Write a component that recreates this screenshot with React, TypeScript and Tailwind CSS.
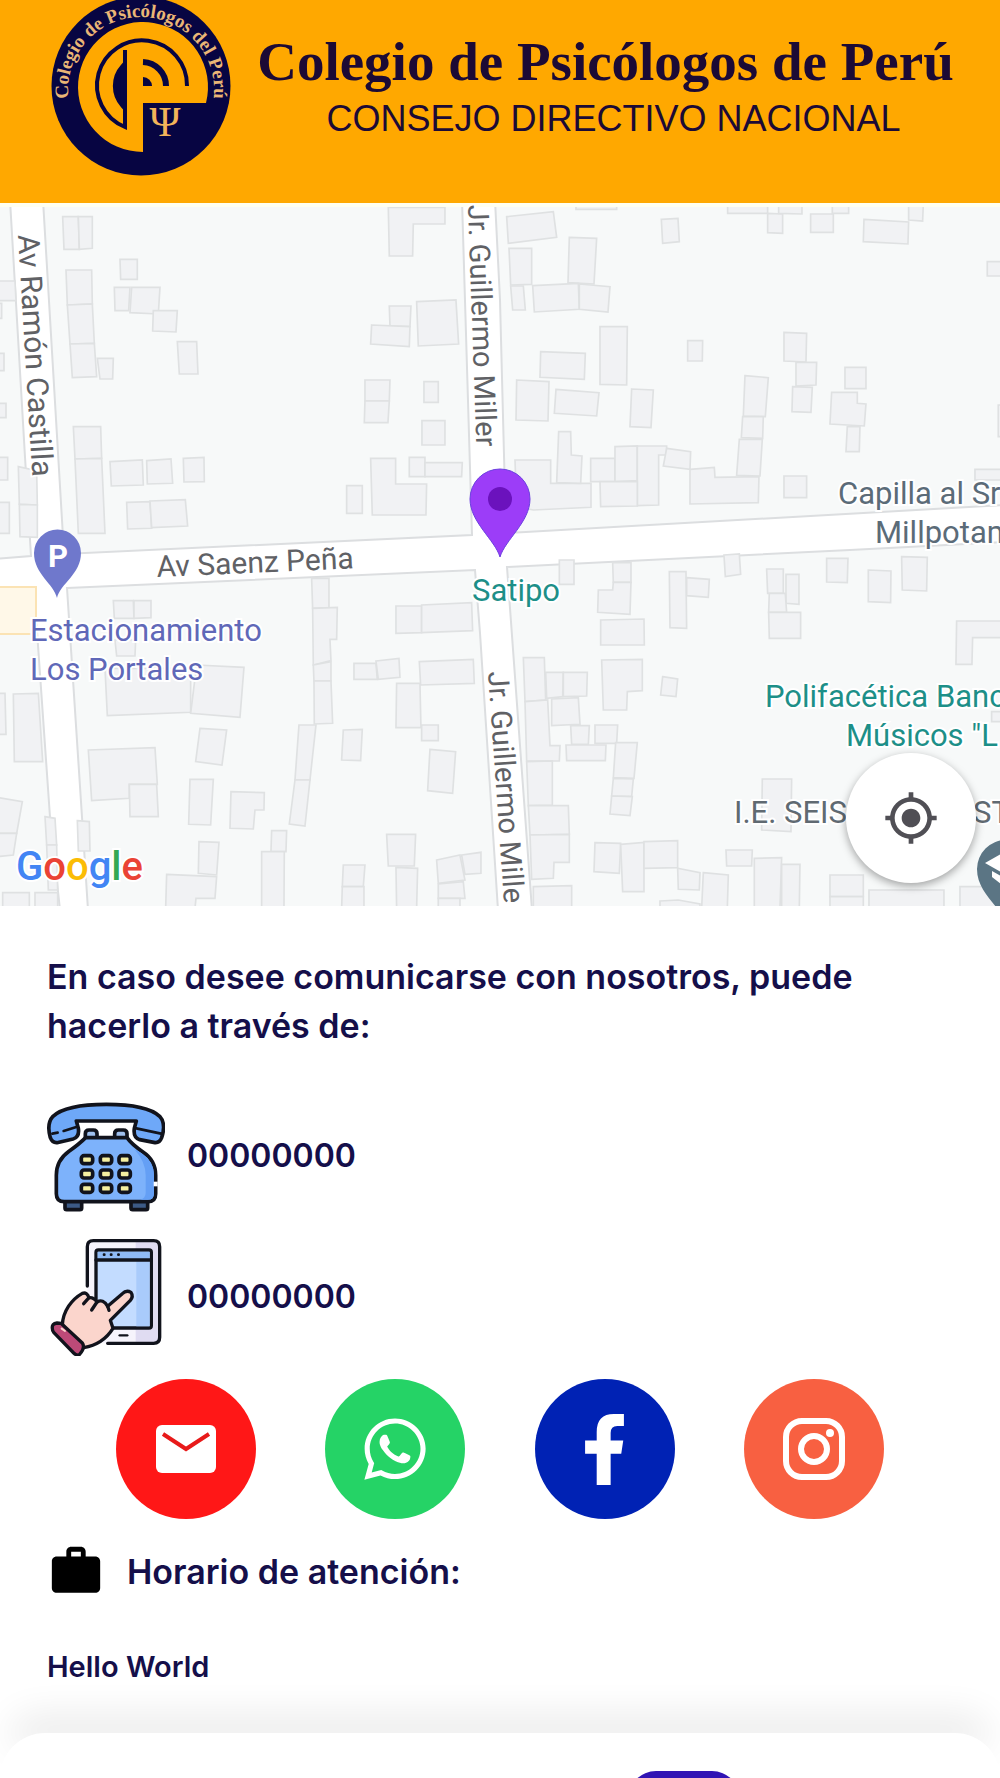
import React from "react";
import { FaWhatsapp } from "react-icons/fa";
import { MdMyLocation, MdWork } from "react-icons/md";

const NAVY = "#070542";
const ORANGE = "#ffa800";

function SealLogo() {
  return (
    <svg viewBox="51 -4 180 180" className="-mt-1 size-[180px] shrink-0" role="img" aria-label="Colegio de Psicólogos del Perú">
      <defs>
        <path id="seal-arc" d="M70 107 A73 73 0 1 1 212 107" />
      </defs>
      <circle cx="141" cy="86" r="89.5" fill={NAVY} />
      <path d="M143 103 V152 A65 65 0 1 1 206 103 Z" fill={ORANGE} />
      <path d="M187 86 A45 45 0 1 0 125 127 V50" fill="none" stroke={NAVY} strokeWidth="4" />
      <path d="M122 66 A30 30 0 0 0 122 106 Z" fill={NAVY} stroke={NAVY} strokeWidth="3" />
      <path d="M143 62 A24 24 0 0 1 166 86" fill="none" stroke={NAVY} strokeWidth="6" />
      <path d="M143 77 A9 9 0 0 1 152 86 H143 Z" fill={NAVY} />
      <text x="165" y="136" textAnchor="middle" fontFamily="Liberation Serif, serif" fontSize="42" fill="#f3b45a">Ψ</text>
      <text fontFamily="Liberation Serif, serif" fontWeight="700" fontSize="19" fill="#eab676">
        <textPath href="#seal-arc" startOffset="50%" textAnchor="middle">Colegio de Psicólogos del Perú</textPath>
      </text>
    </svg>
  );
}

const blocks = [
  "-5,200 10,200 25,457 31,556 -5,559",
  "43,200 62,520 64,554 472,535 462,200",
  "495,200 500,300 506,533 1005,505 1005,200",
  "-5,590 34,588 50,817 60,910 -5,910",
  "67,588 475,570 480,633 498,910 88,910 82,817",
  "507,567 850,550 1005,542 1005,910 532,910",
];

type Sector = { shift: string; shapes: string[] };

const sectors: Sector[] = [
  {
    shift: "translate(0 200) scale(0.3333)",
    shapes: [
      "188,50 235,50 238,148 192,148", "235,50 277,50 277,145 238,148",
      "198,210 275,210 277,312 202,315", "202,315 277,312 283,430 210,432", "210,432 283,430 290,530 217,533",
      "292,475 340,475 338,537 300,537", "360,178 412,178 412,238 362,238", "343,262 390,262 386,332 345,332",
      "395,262 480,262 475,342 390,338", "460,332 532,332 528,396 458,393", "532,425 590,425 594,522 538,522",
      "220,680 302,680 305,775 225,777", "225,777 305,775 315,1000 235,1000", "330,785 427,780 430,855 334,858",
      "440,782 513,777 518,850 442,852", "550,775 612,772 613,845 552,846", "380,907 450,905 455,985 383,987",
      "450,903 556,899 563,978 455,983", "1165,22 1335,22 1335,72 1240,72 1238,168 1168,168",
      "1168,318 1233,318 1230,380 1170,378", "1115,375 1230,380 1228,440 1112,432", "1250,305 1368,300 1376,432 1255,438",
      "1095,540 1170,540 1168,603 1095,603", "1095,603 1168,603 1164,668 1093,668", "1272,545 1315,545 1315,607 1272,607",
      "1266,662 1335,662 1335,735 1266,735", "1112,775 1187,775 1187,852 1280,852 1278,945 1117,945",
      "1228,772 1275,772 1275,830 1228,830", "1275,788 1387,788 1385,830 1275,830", "1040,857 1087,857 1087,940 1040,940",
      "-5,243 45,243 48,302 -5,302", "-5,310 5,310 5,355 -5,355", "-5,460 12,460 12,512 -5,512", "-5,610 18,610 18,653 -5,653",
      "-5,772 23,772 23,840 -5,840", "55,800 110,812 112,915 58,913", "58,913 112,915 112,1012 60,1010", "-5,907 28,907 28,1000 -5,1000",
    ],
  },
  {
    shift: "translate(500 200) scale(0.3333)",
    shapes: [
      "20,50 160,35 170,112 25,130", "27,145 95,145 95,253 32,255", "32,258 70,258 76,330 38,330", "208,112 290,115 282,252 204,248",
      "98,257 235,250 238,328 103,336", "238,252 330,260 324,336 238,328", "300,380 382,380 380,555 300,553",
      "122,455 256,460 253,538 120,532", "50,540 147,545 144,663 48,660", "168,568 297,578 290,648 163,640",
      "395,567 460,570 453,683 390,680", "563,422 608,422 607,483 563,483", "484,58 534,55 538,125 488,130",
      "683,15 803,15 803,40 683,40", "803,40 848,42 848,100 803,98", "836,15 906,15 906,42 836,40", "932,42 1000,42 1000,97 932,97",
      "997,15 1046,15 1046,40 997,40", "1092,58 1226,66 1224,132 1090,125", "1226,15 1270,15 1268,63 1226,60",
      "1462,185 1510,185 1510,228 1462,228", "852,397 920,400 918,486 852,483", "888,487 950,487 948,555 888,558",
      "878,560 937,562 933,637 876,635", "735,527 805,533 796,650 730,648", "728,650 790,650 788,715 724,713",
      "718,718 787,718 780,828 710,826", "1035,502 1098,502 1098,566 1035,566", "995,577 1072,577 1072,610 1098,612 1093,678 990,672",
      "1042,680 1080,680 1078,755 1038,755", "852,828 920,828 920,893 852,893",
      "45,780 152,780 152,850 273,850 273,922 100,930 50,920", "176,695 212,695 214,765 246,768 242,850 170,848",
      "272,775 345,775 345,845 272,845", "345,740 412,738 412,842 345,845", "412,738 500,738 500,765 476,765 476,915 412,917",
      "300,845 412,845 412,918 302,920", "500,745 572,755 570,808 490,798", "570,808 643,802 645,832 777,830 775,908 570,912",
      "1495,615 1510,615 1510,710 1495,710", "1425,808 1510,808 1510,840 1425,840",
      "228,15 350,15 350,28 228,28",
    ],
  },
  {
    shift: "translate(0 550) scale(0.3333)",
    shapes: [
      "340,152 400,152 402,205 343,205", "402,152 453,152 453,203 402,205", "345,270 407,270 405,318 350,318",
      "315,355 572,355 572,487 322,497", "590,345 732,352 720,502 572,490", "265,600 465,593 472,703 388,703 388,745 275,752",
      "388,703 470,703 475,800 390,800", "600,535 680,540 666,645 587,635", "570,688 640,688 632,825 566,823",
      "693,725 793,728 792,780 765,780 760,837 690,835", "935,85 987,85 987,173 938,175", "938,175 1012,172 1010,268 990,268 993,332 940,345",
      "940,345 993,335 993,393 942,393", "942,393 993,393 998,520 943,522", "897,525 948,525 930,690 885,690",
      "885,690 930,690 915,828 868,822", "1030,540 1087,538 1082,632 1025,630", "1188,168 1265,168 1265,248 1188,250",
      "1265,165 1415,158 1418,242 1265,248", "1062,340 1128,340 1132,388 1062,388", "1128,333 1197,325 1200,382 1135,388",
      "1258,335 1420,328 1423,400 1262,405", "1190,400 1260,400 1263,533 1188,533", "1265,525 1315,525 1315,572 1265,572",
      "1290,598 1367,605 1358,730 1283,722", "1160,853 1247,853 1243,948 1165,948", "1188,952 1253,955 1250,1075 1190,1075",
      "1030,945 1095,945 1090,1010 1027,1010", "1027,1010 1092,1010 1092,1075 1025,1075", "1310,930 1380,915 1395,990 1315,1000",
      "1385,915 1443,907 1443,970 1395,973", "1315,1002 1390,995 1395,1045 1315,1045", "1315,1045 1380,1045 1380,1075 1315,1075",
      "815,842 860,842 858,905 813,905", "785,905 853,905 852,1075 785,1075", "597,875 657,877 650,975 595,970",
      "500,973 650,980 645,1045 588,1045 585,1075 497,1075", "-5,430 15,430 18,553 -5,553", "40,432 115,430 128,635 43,635",
      "-5,743 67,755 50,850 -5,850", "-5,850 50,850 40,915 -5,920", "135,800 165,805 170,885 140,885", "140,885 170,885 173,1020 145,1020",
      "232,812 268,815 270,903 235,903", "8,1028 88,1028 88,1075 8,1075", "105,1028 173,1028 173,1075 105,1075",
    ],
  },
  {
    shift: "translate(500 550) scale(0.3333)",
    shapes: [
      "178,30 222,30 222,103 178,103", "338,38 393,38 393,97 340,97", "340,97 393,97 390,193 293,187 295,120 338,120",
      "302,210 432,207 433,285 302,285", "305,330 427,328 427,422 382,425 380,480 310,480", "508,65 558,65 560,235 510,233",
      "560,83 628,88 625,142 560,137", "672,15 718,12 722,73 676,80", "800,57 850,57 850,130 803,130", "858,73 897,73 897,163 858,160",
      "808,130 856,130 860,187 806,187", "806,187 902,187 902,265 808,265", "980,25 1044,25 1042,98 980,96",
      "1105,60 1173,63 1172,158 1105,155", "1205,20 1282,22 1280,123 1207,120", "1370,213 1510,213 1510,263 1418,263 1416,343 1368,343",
      "488,380 533,387 528,440 482,435", "70,323 133,323 137,450 75,455", "137,367 190,367 188,440 140,445", "190,367 262,367 260,438 190,440",
      "155,447 235,443 240,523 155,527", "75,455 143,450 150,587 180,587 178,633 80,633", "212,527 268,527 265,583 215,583",
      "285,525 353,525 350,580 285,580", "198,585 318,585 316,632 200,632", "347,578 412,578 402,685 340,683",
      "340,685 400,687 395,740 335,738", "335,738 397,740 390,797 330,792", "80,635 157,633 157,765 85,767", "85,767 205,767 208,853 90,855",
      "90,855 208,853 208,937 162,937 160,985 95,988", "100,1010 215,1007 215,1075 100,1075", "285,878 362,880 358,970 282,965",
      "362,883 432,877 432,1025 368,1025", "432,875 533,872 533,953 432,955", "533,955 600,968 598,1020 535,1018",
      "610,968 685,975 682,1075 605,1075", "678,900 757,900 755,948 680,948", "763,925 845,923 840,1075 763,1075",
      "845,943 900,943 898,1075 845,1075", "787,687 875,687 873,845 785,840", "990,975 1090,975 1090,1040 990,1040",
      "990,1040 1090,1040 1090,1075 990,1075", "1107,1020 1332,1020 1332,1075 1107,1075", "1380,1010 1510,1010 1510,1075 1380,1075",
      "480,1053 535,1050 600,1062 600,1075 480,1075", "1475,485 1510,485 1510,515 1475,515",
    ],
  },
];

function StreetMap() {
  return (
    <svg viewBox="0 203 1000 703" className="block w-full" role="img" aria-label="Mapa de Satipo" fontFamily="Roboto, sans-serif">
      <rect y="203" width="1000" height="703" fill="#ffffff" />
      {blocks.map((points) => (
        <polygon key={points} points={points} fill="#f7f9f9" stroke="#dcdee0" strokeWidth="2" />
      ))}
      {sectors.map((sector) => (
        <g key={sector.shift} transform={sector.shift} fill="#f1f2f4" stroke="#dfe1e2" strokeWidth="5">
          {sector.shapes.map((points) => (
            <polygon key={points} points={points} />
          ))}
        </g>
      ))}
      <rect x="-4" y="587" width="40" height="47" fill="#fff8e8" stroke="#fbe3b4" strokeWidth="2" />
      <rect y="203" width="1000" height="4" fill="#fffff0" />

      <g fill="#606165" fontSize="30" stroke="#ffffff" strokeWidth="4" paintOrder="stroke">
        <text transform="translate(18 235) rotate(86.6)">Av Ramón Castilla</text>
        <text transform="translate(468 205) rotate(88)" fontSize="29">Jr. Guillermo Miller</text>
        <text transform="translate(488 672) rotate(86)" fontSize="29">Jr. Guillermo Mille</text>
        <text transform="translate(157 577) rotate(-2.5)">Av Saenz Peña</text>
      </g>
      <g fontSize="31" stroke="#ffffff" strokeWidth="4" paintOrder="stroke">
        <g fill="#6068b8">
          <text x="30" y="641">Estacionamiento</text>
          <text x="30" y="680">Los Portales</text>
        </g>
        <text x="472" y="601" fill="#1d8f88">Satipo</text>
        <g fill="#5b6b78">
          <text x="838" y="504">Capilla al Sr</text>
          <text x="875" y="543">Millpotam</text>
        </g>
        <g fill="#1d8f88">
          <text x="765" y="707">Polifacética Banc</text>
          <text x="846" y="746">Músicos "L</text>
        </g>
        <g fill="#606a72">
          <text x="734" y="823">I.E. SEIS</text>
          <text x="973" y="823">ST</text>
        </g>
      </g>

      <path d="M57 598 C54 584 34 574 34 553 A23.5 23.5 0 0 1 81 553 C81 574 60 584 57 598 Z" fill="#6f78cc" />
      <text x="58" y="567" textAnchor="middle" fontSize="31" fontWeight="700" fill="#ffffff">P</text>

      <path d="M500 557 C495 540 470 522 470 499 A30 30 0 0 1 530 499 C530 522 505 540 500 557 Z" fill="#9c3df8" stroke="#6b3fe0" strokeWidth="1" />
      <circle cx="500" cy="499" r="12" fill="#6b12bd" />

      <path d="M1006 926 C1002 906 977 894 977 869 A29 29 0 0 1 1035 869 C1035 894 1010 906 1006 926 Z" fill="#5b7584" />
      <path d="M985 863 L1006 851 V875 Z M992 871 L1006 879 V888 L992 877 Z" fill="#ffffff" />

      <text x="16" y="880" fontSize="40" fontWeight="500" stroke="#ffffff" strokeWidth="4" paintOrder="stroke">
        <tspan fill="#4285f4">G</tspan>
        <tspan fill="#ea4335">o</tspan>
        <tspan fill="#fbbc04">o</tspan>
        <tspan fill="#4285f4">g</tspan>
        <tspan fill="#34a853">l</tspan>
        <tspan fill="#ea4335">e</tspan>
      </text>
    </svg>
  );
}

function TelephoneIcon() {
  const keys = [170, 227, 283].flatMap((x) => [238, 281, 324].map((y) => ({ x, y })));
  return (
    <svg viewBox="50 50 354 354" className="size-[118px] shrink-0" aria-hidden="true" stroke="#11131c" strokeWidth="11" strokeLinejoin="round" strokeLinecap="round">
      <rect x="104" y="362" width="50" height="26" rx="5" fill="#3c5a86" />
      <rect x="302" y="362" width="50" height="26" rx="5" fill="#3c5a86" />
      <path d="M165 172 V160 Q165 149 176 149 H189 Q200 149 200 160 V172 M253 172 V160 Q253 149 264 149 H279 Q290 149 290 160 V172" fill="#9fc0ee" />
      <path d="M166 172 H290 Q304 192 338 215 Q376 240 376 285 V340 Q376 364 352 364 H102 Q78 364 78 340 V285 Q78 240 116 213 Q148 190 166 172 Z" fill="#7db2fb" />
      <path d="M332 218 Q371 243 371 285 V340 Q371 358 352 358 H330 Q346 354 346 338 V285 Q346 245 312 206 Z" fill="#649ff5" stroke="none" />
      <path d="M376 304 V318" stroke="#ffffff" strokeWidth="12" strokeLinecap="butt" />
      <path d="M138 122 H318 L312 144 Q308 172 328 178 L374 187 Q388 188 394 172 Q408 130 388 108 Q350 72 228 72 Q106 72 68 108 Q48 130 60 172 Q66 188 80 187 L128 176 Q148 170 144 144 Z" fill="#6ea8f8" />
      <path d="M100 152 L138 140 M66 160 L82 157 M318 144 L392 160" fill="none" strokeWidth="8" />
      {keys.map(({ x, y }) => (
        <rect key={`${x}-${y}`} x={x - 17} y={y - 12} width="34" height="24" rx="8" fill="#f4efa0" />
      ))}
    </svg>
  );
}

function TabletTouchIcon() {
  return (
    <svg viewBox="50 471 354 354" className="size-[118px] shrink-0" aria-hidden="true" stroke="#11131c" strokeWidth="10" strokeLinejoin="round" strokeLinecap="round">
      <rect x="171" y="479" width="217" height="308" rx="18" fill="#f6f4fc" stroke="none" />
      <path d="M316 479 H370 Q388 479 388 497 V769 Q388 787 370 787 H316 Z" fill="#e0dcf2" stroke="none" />
      <path d="M171 615 V497 Q171 479 189 479 H370 Q388 479 388 497 V769 Q388 787 370 787 H232" fill="none" />
      <rect x="197" y="507" width="166" height="234" rx="7" fill="#c3dcff" />
      <path d="M318 540 H358 V736 H318 Z" fill="#a9cbfb" stroke="none" />
      <path d="M202 512 H358 V535 H202 Z" fill="#8fbaf6" stroke="none" />
      <path d="M197 537 H363" />
      <path d="M221 521 H222 M242 521 H243 M264 521 H265" strokeWidth="8" />
      <path d="M268 763 H291" strokeWidth="7" />
      <path d="M96 732 C98 690 124 655 156 637 Q170 632 176 650 Q190 648 200 663 Q218 652 232 676 L276 638 Q288 626 302 634 Q310 646 300 658 L240 718 L248 742 Q218 790 160 800 Z" fill="#fbd5cc" />
      <path d="M176 650 L160 668 M200 663 L184 687 M232 676 L236 688" fill="none" />
      <path d="M66 742 Q64 728 80 726 L92 727 L156 786 Q166 800 146 822 Q138 824 130 816 L70 754 Q66 750 66 742 Z" fill="#bd4a78" />
      <path d="M94 743 L104 750" stroke="#fbd5cc" strokeWidth="6" />
    </svg>
  );
}

function MailGlyph() {
  return (
    <svg viewBox="0 0 60 48" className="h-12 w-[60px]" aria-hidden="true">
      <rect width="60" height="48" rx="6" fill="currentColor" />
      <path d="M7 9 L30 24 L53 9" fill="none" stroke="#e81a1a" strokeWidth="4" />
    </svg>
  );
}

function FacebookGlyph() {
  return (
    <svg viewBox="255 158 117 214" className="h-[71px] w-[39px]" aria-hidden="true" fill="currentColor">
      <path d="M290 372 V278 H255 V238 H290 V212 Q290 158 342 158 H372 V194 H352 Q332 194 332 215 V238 H370 L364 278 H332 V372 Z" />
    </svg>
  );
}

function InstagramGlyph() {
  return (
    <svg viewBox="0 0 62 62" className="size-[62px]" aria-hidden="true" fill="none" stroke="currentColor" strokeWidth="6">
      <rect x="3" y="3" width="56" height="56" rx="16" />
      <circle cx="31" cy="31" r="13" />
      <circle cx="47" cy="15" r="4" fill="currentColor" stroke="none" />
    </svg>
  );
}

const phones = [
  { id: "fijo", Icon: TelephoneIcon, number: "00000000" },
  { id: "movil", Icon: TabletTouchIcon, number: "00000000" },
];

const socials = [
  { label: "Correo", href: "#correo", color: "bg-[#ff1717]", icon: <MailGlyph /> },
  { label: "WhatsApp", href: "#whatsapp", color: "bg-[#25d366]", icon: <FaWhatsapp size={70} /> },
  { label: "Facebook", href: "#facebook", color: "bg-[#0022b4]", icon: <FacebookGlyph /> },
  { label: "Instagram", href: "#instagram", color: "bg-[#f86041]", icon: <InstagramGlyph /> },
];

export default function App() {
  return (
    <div className="flex min-h-screen flex-col bg-white font-['Inter',sans-serif] text-[#150f4a]">
      <header className="flex h-[203px] items-start overflow-hidden bg-[#ffa800] pl-[51px] text-[#1c0a35]">
        <SealLogo />
        <div className="flex flex-1 flex-col items-center pt-7 pr-5 whitespace-nowrap">
          <h1 className="font-['Liberation_Serif',serif] text-[55px] leading-[68px] font-bold">Colegio de Psicólogos de Perú</h1>
          <p className="pl-4 font-['Liberation_Sans',sans-serif] text-[36px] leading-[46px]">CONSEJO DIRECTIVO NACIONAL</p>
        </div>
      </header>

      <section className="relative overflow-hidden">
        <StreetMap />
        <button
          type="button"
          aria-label="Mi ubicación"
          className="absolute right-6 bottom-[23px] flex size-[130px] items-center justify-center rounded-full bg-white text-[#504f55] shadow-[0_3px_8px_rgba(0,0,0,0.35)]"
        >
          <MdMyLocation size={56} />
        </button>
      </section>

      <main className="flex flex-1 flex-col gap-[23px] px-[47px] pt-[46px]">
        <p className="mb-6 text-[34px] leading-[49px] font-semibold">
          En caso desee comunicarse con nosotros, puede
          <br />
          hacerlo a través de:
        </p>
        {phones.map(({ id, Icon, number }) => (
          <div key={id} className="flex items-center gap-[22px]">
            <Icon />
            <span className="text-[32px] font-semibold">{number}</span>
          </div>
        ))}
        <div className="flex justify-evenly">
          {socials.map(({ label, href, color, icon }) => (
            <a key={label} href={href} aria-label={label} className={`flex size-[140px] items-center justify-center rounded-full text-white ${color}`}>
              {icon}
            </a>
          ))}
        </div>
        <div className="flex items-center gap-[22px]">
          <MdWork size={58} className="shrink-0 text-black" />
          <h2 className="text-[34px] font-semibold">Horario de atención:</h2>
        </div>
        <p className="mt-6 text-[29px] leading-10 font-semibold">Hello World</p>
      </main>

      <nav aria-label="Navegación" className="flex h-[45px] justify-end rounded-t-[48px] bg-white pr-[26%] shadow-[0_-26px_36px_-8px_rgba(0,0,0,0.09)]">
        <div className="flex h-full overflow-hidden pt-[38px]">
          <button type="button" aria-label="Contacto" className="h-28 w-28 shrink-0 rounded-[28px] bg-[#3114b4]" />
        </div>
      </nav>
    </div>
  );
}
